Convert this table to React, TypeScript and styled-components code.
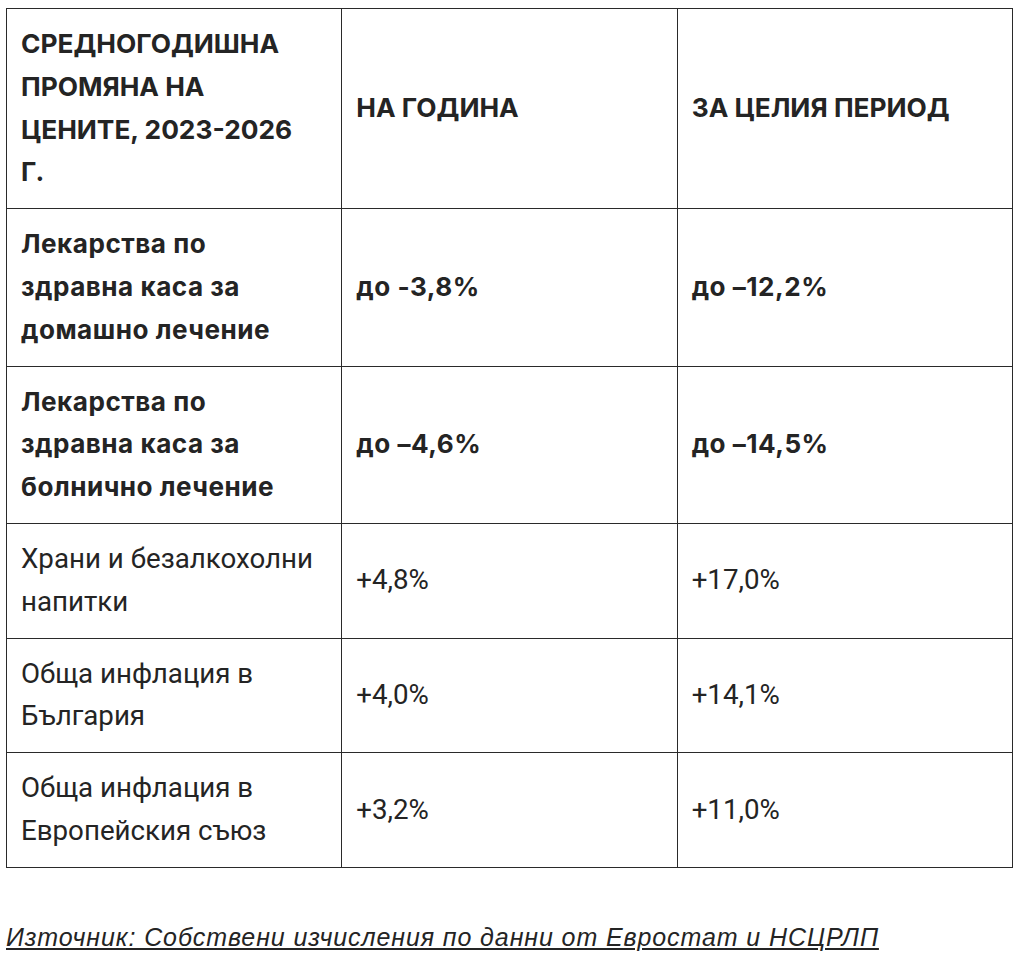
import styled, { createGlobalStyle } from 'styled-components';

const GlobalStyle = createGlobalStyle`
  html, body {
    margin: 0;
    padding: 0;
    background: #ffffff;
  }
`;

// --- Types ---
interface PriceRow {
  label: string;
  perYear: string;
  total: string;
  strong?: boolean;
}

const rows: PriceRow[] = [
  { label: 'Лекарства по здравна каса за домашно лечение', perYear: 'до -3,8%', total: 'до –12,2%', strong: true },
  { label: 'Лекарства по здравна каса за болнично лечение', perYear: 'до –4,6%', total: 'до –14,5%', strong: true },
  { label: 'Храни и безалкохолни напитки', perYear: '+4,8%', total: '+17,0%' },
  { label: 'Обща инфлация в България', perYear: '+4,0%', total: '+14,1%' },
  { label: 'Обща инфлация в Европейския съюз', perYear: '+3,2%', total: '+11,0%' },
];

// --- Styled Components ---
const Page = styled.div`
  padding: 8px 4px 0 6px;
  font-family: Roboto, 'Liberation Sans', sans-serif;
  color: #242424;
`;

const Table = styled.table`
  width: 1007px;
  border-collapse: collapse;
  table-layout: fixed;
`;

const HeadCell = styled.th`
  border: 1px solid #2a2a2a;
  padding: 14px 20px 14px 14px;
  text-align: left;
  vertical-align: middle;
  font-family: Inter, Roboto, sans-serif;
  font-weight: 700;
  font-size: 26.3px;
  line-height: 42.8px;
  text-transform: uppercase;
`;

const Cell = styled.td<{ $strong?: boolean }>`
  border: 1px solid #2a2a2a;
  padding: 14px 20px 14px 14px;
  vertical-align: middle;
  font-family: ${({ $strong }) => ($strong ? 'Inter, Roboto, sans-serif' : 'Roboto, sans-serif')};
  font-weight: ${({ $strong }) => ($strong ? 700 : 400)};
  font-size: ${({ $strong }) => ($strong ? '26.1px' : '27.7px')};
  letter-spacing: ${({ $strong }) => ($strong ? '0.5px' : 'normal')};
  line-height: 42.8px;
`;

const Source = styled.p`
  margin: 54px 0 0 0;
  font-family: 'Liberation Sans', Arial, sans-serif;
  font-style: italic;
  font-size: 25px;
  letter-spacing: 0.9px;
  line-height: 30px;
`;

const SourceLink = styled.a`
  color: #242424;
  text-decoration: underline;
  text-decoration-thickness: 2px;
  text-underline-offset: 2px;
`;

export default function App() {
  return (
    <Page>
      <GlobalStyle />
      <Table>
        <thead>
          <tr>
            <HeadCell>Средногодишна промяна на цените, 2023-2026 г.</HeadCell>
            <HeadCell>На година</HeadCell>
            <HeadCell>За целия период</HeadCell>
          </tr>
        </thead>
        <tbody>
          {rows.map((row) => (
            <tr key={row.label}>
              <Cell $strong={row.strong}>{row.label}</Cell>
              <Cell $strong={row.strong}>{row.perYear}</Cell>
              <Cell $strong={row.strong}>{row.total}</Cell>
            </tr>
          ))}
        </tbody>
      </Table>
      <Source>
        <SourceLink href="#">Източник: Собствени изчисления по данни от Евростат и НСЦРЛП</SourceLink>
      </Source>
    </Page>
  );
}
